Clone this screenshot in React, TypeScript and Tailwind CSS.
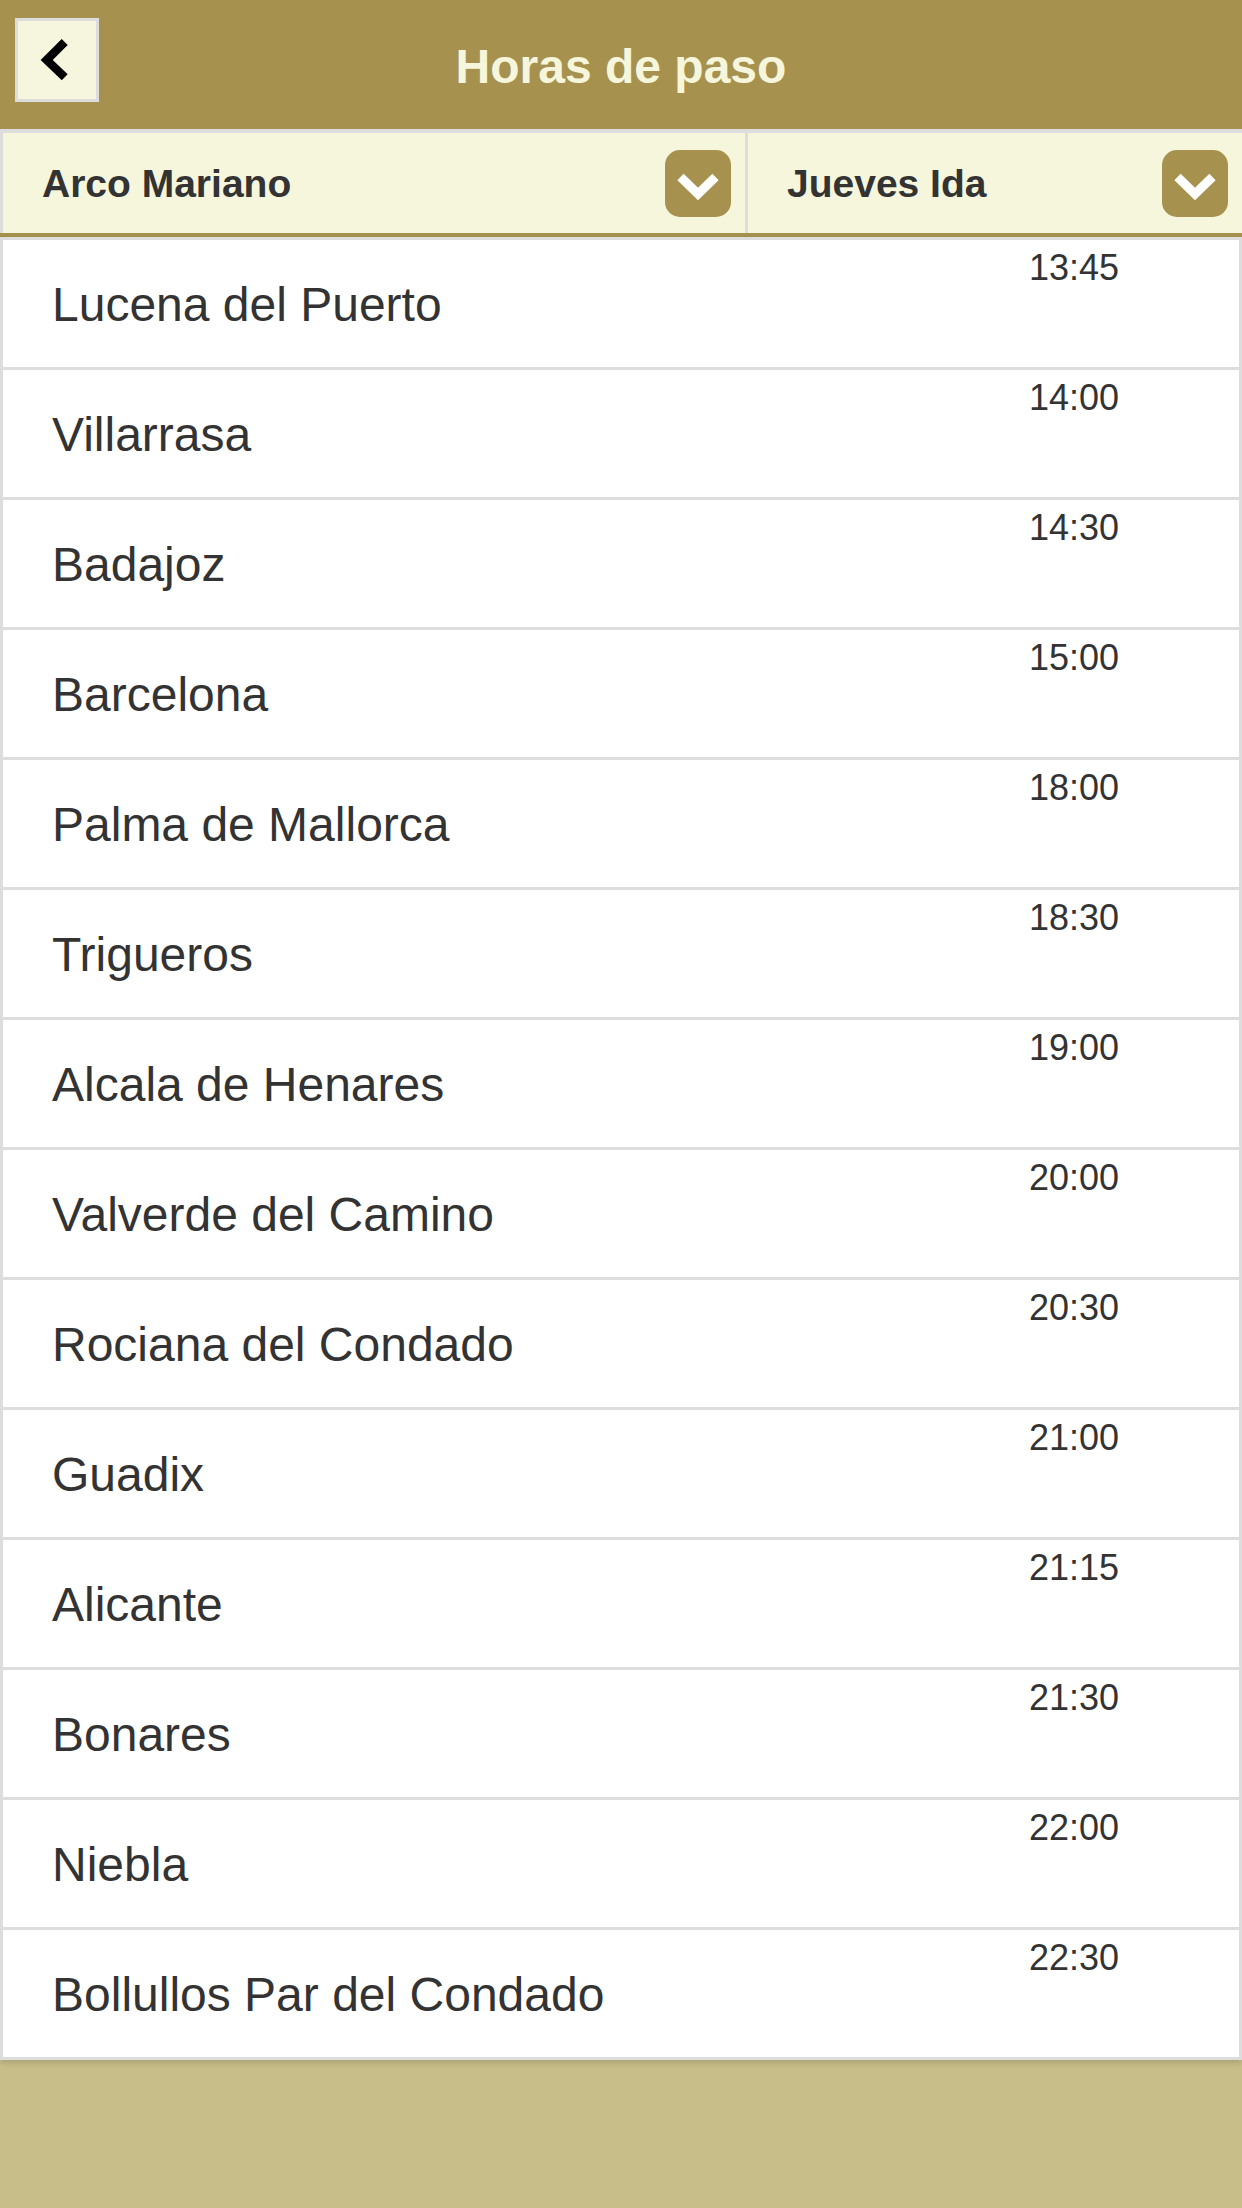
const stops = [
  { name: "Lucena del Puerto", time: "13:45" },
  { name: "Villarrasa", time: "14:00" },
  { name: "Badajoz", time: "14:30" },
  { name: "Barcelona", time: "15:00" },
  { name: "Palma de Mallorca", time: "18:00" },
  { name: "Trigueros", time: "18:30" },
  { name: "Alcala de Henares", time: "19:00" },
  { name: "Valverde del Camino", time: "20:00" },
  { name: "Rociana del Condado", time: "20:30" },
  { name: "Guadix", time: "21:00" },
  { name: "Alicante", time: "21:15" },
  { name: "Bonares", time: "21:30" },
  { name: "Niebla", time: "22:00" },
  { name: "Bollullos Par del Condado", time: "22:30" },
];

const SelectButton = ({ label }: { label: string }) => (
  <div className="flex h-full items-center justify-between pl-[39px] pr-[14px]">
    <span className="mt-[3px] text-[39px] font-bold text-[#333]">{label}</span>
    <span className="flex h-[67px] w-[66px] items-center justify-center rounded-[15px] bg-[#a6924e]">
      <svg width="66" height="67" viewBox="0 0 66 67">
        <polyline
          points="15.5,27 33,44 50.5,27"
          fill="none"
          stroke="#fff"
          strokeWidth="9"
        />
      </svg>
    </span>
  </div>
);

const App = () => {
  return (
    <div
      className="flex min-h-[2208px] w-full flex-col bg-[#c8be8a]"
      style={{ fontFamily: '"Liberation Sans", Arial, sans-serif' }}
    >
      {/* Header */}
      <div className="relative flex h-[129px] items-center justify-center bg-[#a6924e] pt-[5px]">
        <button className="absolute left-[15px] top-[18px] h-[84px] w-[84px] border-[3px] border-[#ddd] bg-[#f6f6df]">
          <svg
            className="absolute left-[-3px] top-[-3px]"
            width="84"
            height="84"
            viewBox="0 0 84 84"
          >
            <polyline
              points="49.7,24 31.7,42 49.7,59.3"
              fill="none"
              stroke="#000"
              strokeWidth="8.5"
            />
          </svg>
        </button>
        <h1 className="text-[48px] font-bold text-[#f6f6dc]">Horas de paso</h1>
      </div>

      {/* Selectors */}
      <div className="flex h-[108px] border-t-[4px] border-b-[4px] border-t-[#ddd] border-b-[#a6924e] bg-[#f6f6dd]">
        <div className="w-[748px] border-l-[3px] border-r-[3px] border-[#ddd]">
          <SelectButton label="Arco Mariano" />
        </div>
        <div className="flex-1">
          <SelectButton label="Jueves Ida" />
        </div>
      </div>

      {/* Stops list */}
      <ul className="border-x-[3px] border-b-[3px] border-[#ddd] bg-white shadow-[0_3px_6px_rgba(0,0,0,0.15)]">
        {stops.map((stop) => (
          <li
            key={stop.name}
            className="relative flex h-[130px] items-center border-t-[3px] border-[#ddd] pl-[49px] pt-[3px]"
          >
            <span className="text-[48px] text-[#333]">{stop.name}</span>
            <span className="absolute right-[120px] top-[10px] text-[36px] leading-[36px] text-[#333]">
              {stop.time}
            </span>
          </li>
        ))}
      </ul>
    </div>
  );
};

export default App;
